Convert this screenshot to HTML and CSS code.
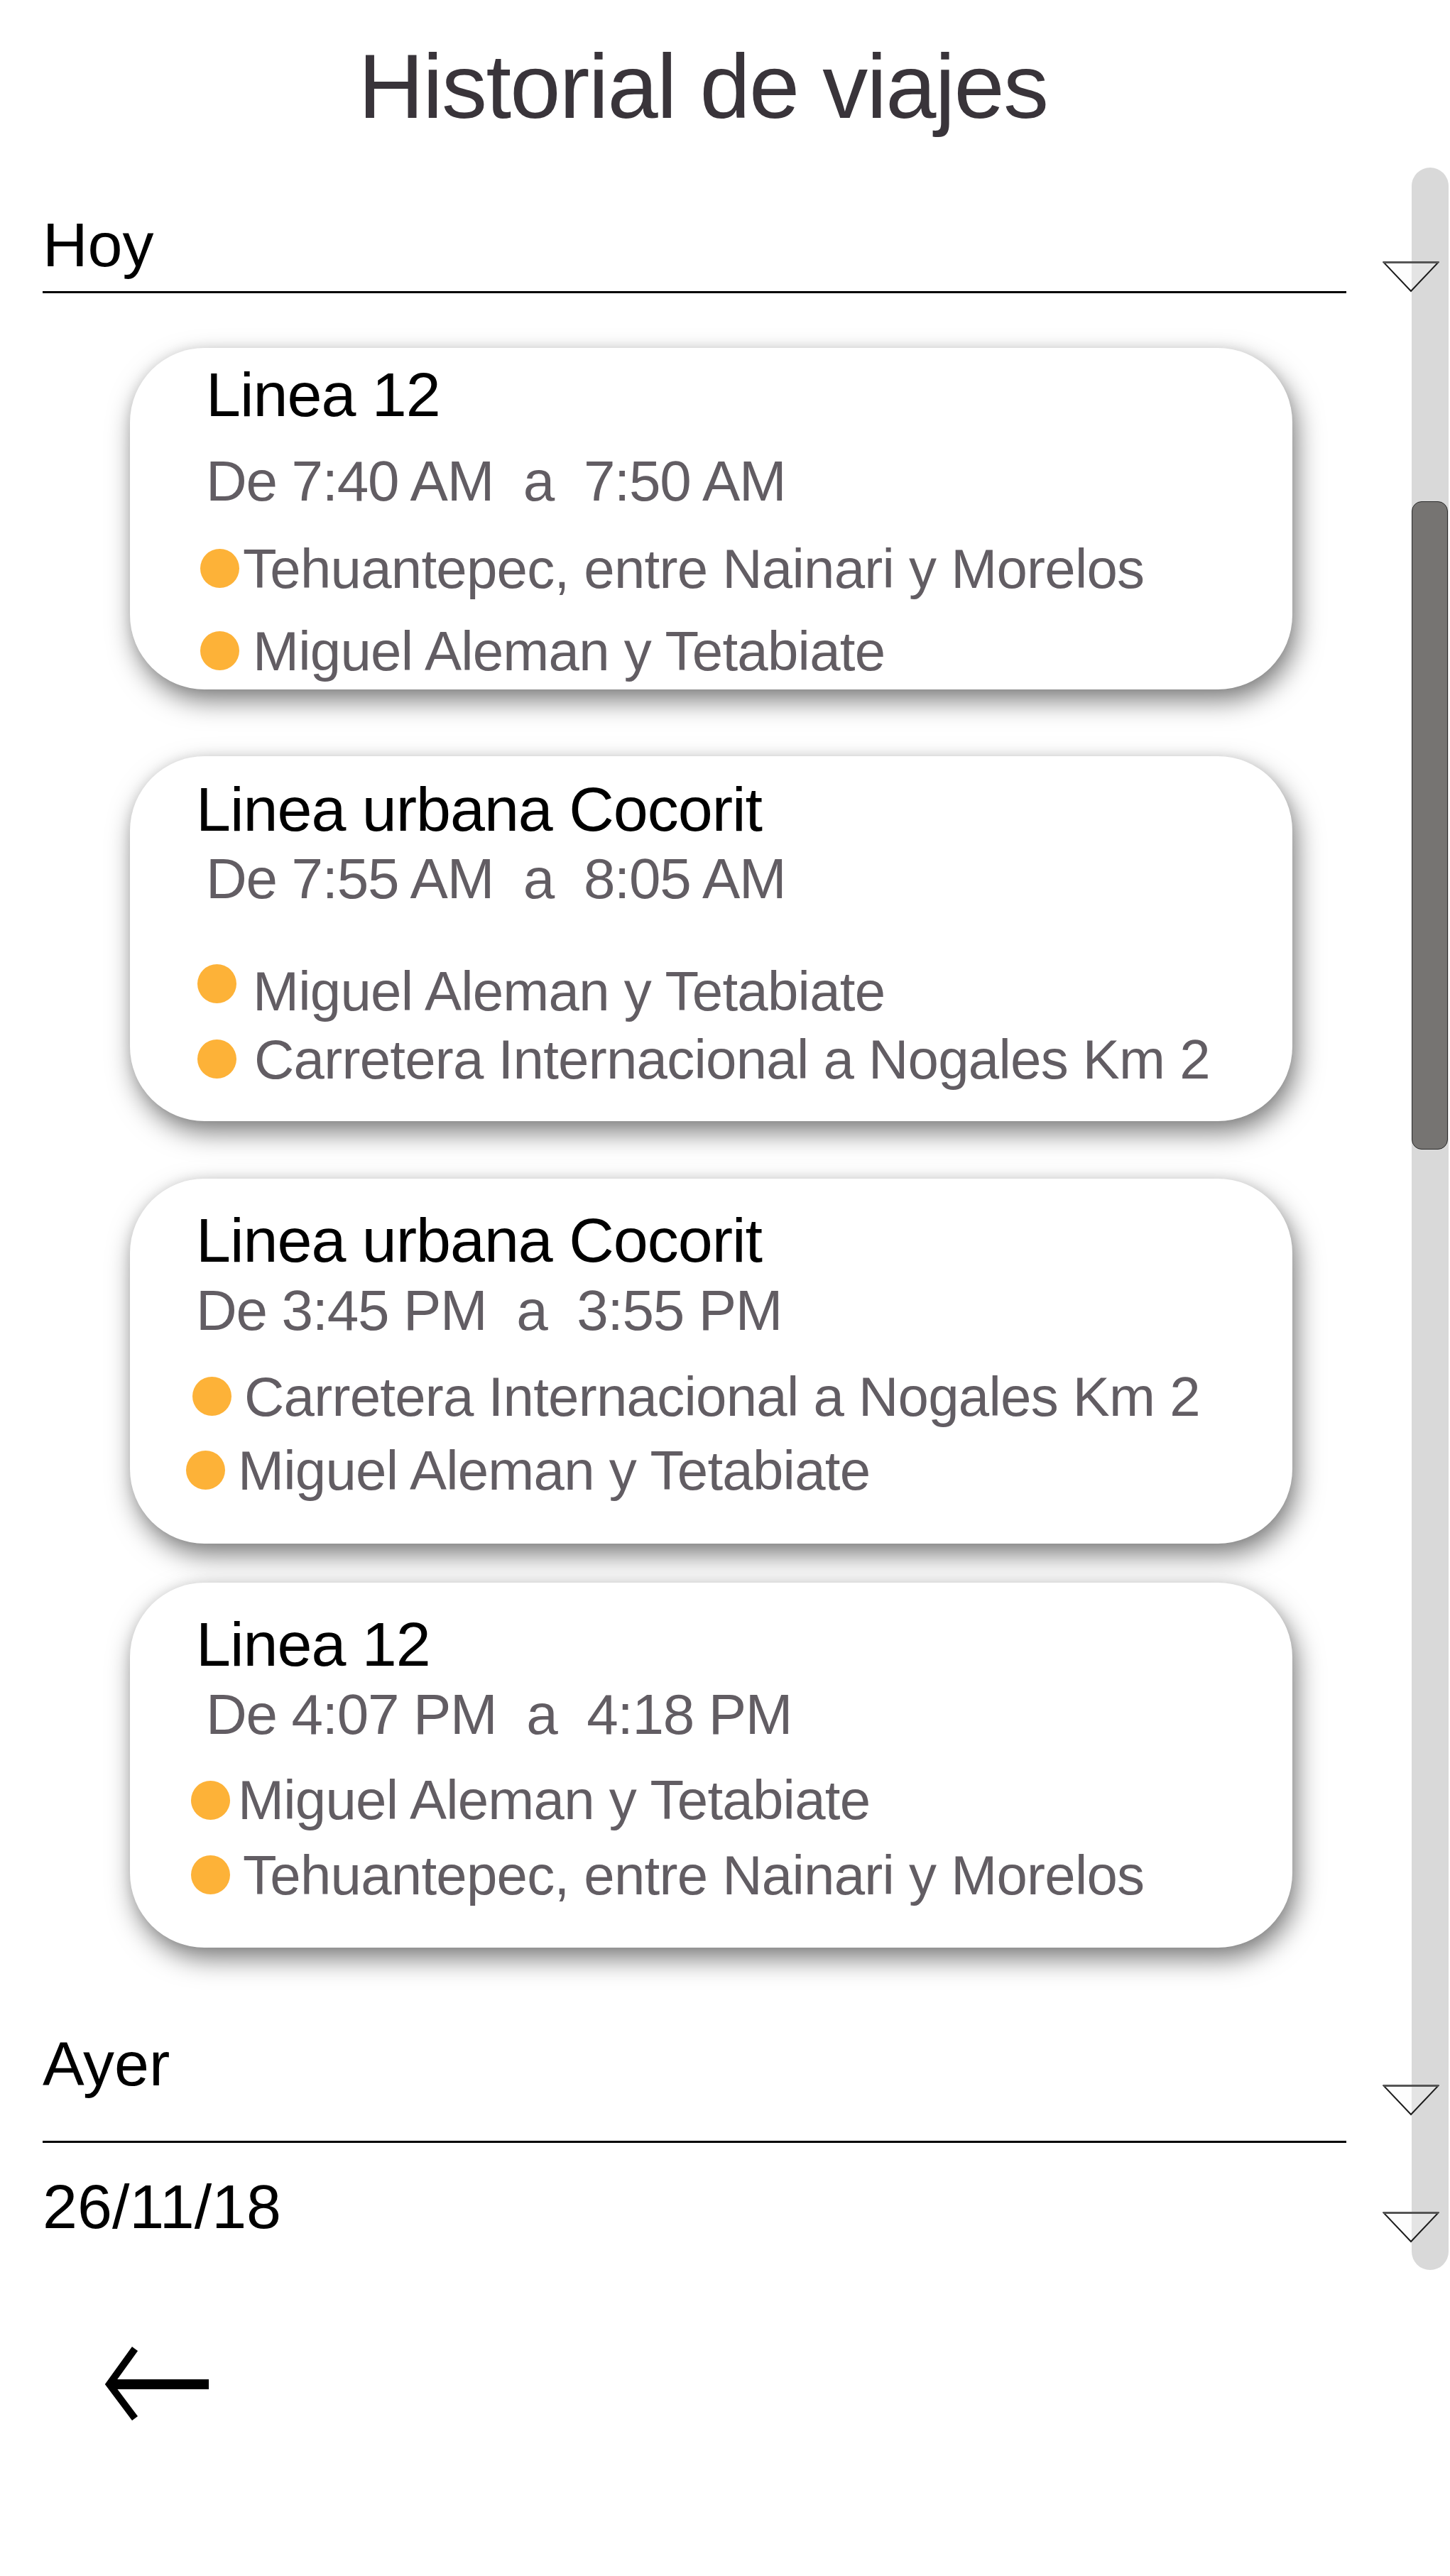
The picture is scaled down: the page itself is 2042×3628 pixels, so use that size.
FILE: index.html
```html
<!DOCTYPE html>
<html lang="es">
<head>
<meta charset="utf-8">
<title>Historial de viajes</title>
<link rel="stylesheet" href="styles.css">
</head>
<body>
<div class="page">
  <h1 class="page-title">Historial de viajes</h1>

  <section class="section section--today">
    <div class="section-head"><span class="section-label">Hoy</span></div>
    <svg class="section-caret" viewBox="0 0 80 44" width="80" height="44" aria-hidden="true">
      <polygon points="1.5,1.5 78.5,1.5 40,42" fill="rgba(250,250,250,0.35)" stroke="#1c1c1c" stroke-width="2" stroke-linejoin="miter"/>
      <line x1="1" y1="1.5" x2="79" y2="1.5" stroke="#555" stroke-width="3"/>
    </svg>
  </section>

  <div class="trips">
    <article class="trip trip--1">
      <h2 class="trip-line">Linea 12</h2>
      <p class="trip-time">De 7:40 AM&nbsp; a&nbsp; 7:50 AM</p>
      <ul class="trip-stops">
        <li class="trip-stop"><span class="trip-dot"></span><span class="trip-place">Tehuantepec, entre Nainari y Morelos</span></li>
        <li class="trip-stop"><span class="trip-dot"></span><span class="trip-place">Miguel Aleman y Tetabiate</span></li>
      </ul>
    </article>

    <article class="trip trip--2">
      <h2 class="trip-line">Linea urbana Cocorit</h2>
      <p class="trip-time">De 7:55 AM&nbsp; a&nbsp; 8:05 AM</p>
      <ul class="trip-stops">
        <li class="trip-stop"><span class="trip-dot"></span><span class="trip-place">Miguel Aleman y Tetabiate</span></li>
        <li class="trip-stop"><span class="trip-dot"></span><span class="trip-place">Carretera Internacional a Nogales Km 2</span></li>
      </ul>
    </article>

    <article class="trip trip--3">
      <h2 class="trip-line">Linea urbana Cocorit</h2>
      <p class="trip-time">De 3:45 PM&nbsp; a&nbsp; 3:55 PM</p>
      <ul class="trip-stops">
        <li class="trip-stop"><span class="trip-dot"></span><span class="trip-place">Carretera Internacional a Nogales Km 2</span></li>
        <li class="trip-stop"><span class="trip-dot"></span><span class="trip-place">Miguel Aleman y Tetabiate</span></li>
      </ul>
    </article>

    <article class="trip trip--4">
      <h2 class="trip-line">Linea 12</h2>
      <p class="trip-time">De 4:07 PM&nbsp; a&nbsp; 4:18 PM</p>
      <ul class="trip-stops">
        <li class="trip-stop"><span class="trip-dot"></span><span class="trip-place">Miguel Aleman y Tetabiate</span></li>
        <li class="trip-stop"><span class="trip-dot"></span><span class="trip-place">Tehuantepec, entre Nainari y Morelos</span></li>
      </ul>
    </article>
  </div>

  <section class="section section--yesterday">
    <div class="section-head"><span class="section-label">Ayer</span></div>
    <svg class="section-caret" viewBox="0 0 80 44" width="80" height="44" aria-hidden="true">
      <polygon points="1.5,1.5 78.5,1.5 40,42" fill="rgba(250,250,250,0.35)" stroke="#1c1c1c" stroke-width="2" stroke-linejoin="miter"/>
      <line x1="1" y1="1.5" x2="79" y2="1.5" stroke="#555" stroke-width="3"/>
    </svg>
  </section>

  <section class="section section--date">
    <div class="section-head"><span class="section-label">26/11/18</span></div>
    <svg class="section-caret" viewBox="0 0 80 44" width="80" height="44" aria-hidden="true">
      <polygon points="1.5,1.5 78.5,1.5 40,42" fill="rgba(250,250,250,0.35)" stroke="#1c1c1c" stroke-width="2" stroke-linejoin="miter"/>
      <line x1="1" y1="1.5" x2="79" y2="1.5" stroke="#555" stroke-width="3"/>
    </svg>
  </section>

  <button class="back" type="button" aria-label="Volver">
    <svg viewBox="0 0 170 120" width="170" height="120" aria-hidden="true">
      <line x1="22" y1="60" x2="159" y2="60" stroke="#000" stroke-width="14"/>
      <polyline points="55,10 19,60 55,108" fill="none" stroke="#000" stroke-width="10" stroke-linejoin="miter" stroke-miterlimit="10"/>
    </svg>
  </button>

  <div class="scrollbar" aria-hidden="true">
    <div class="scrollbar-thumb"></div>
  </div>
</div>
</body>
</html>
```
FILE: styles.css
```css
* {
  box-sizing: border-box;
}

html, body {
  margin: 0;
  padding: 0;
  background: #ffffff;
}

body {
  font-family: "Liberation Sans", Arial, Helvetica, sans-serif;
  color: #000;
}

.page {
  position: relative;
  width: 2042px;
  min-height: 3628px;
  overflow: hidden;
}

.page-title {
  margin: 0;
  padding: 47px 62px 0 0;
  font-size: 128px;
  line-height: 150px;
  font-weight: 400;
  letter-spacing: -1.7px;
  text-align: center;
  color: #39343a;
}

/* Section headers */
.section {
  display: flex;
  align-items: flex-start;
  margin-left: 60px;
}

.section-head {
  width: 1836px;
}

.section-label {
  display: block;
  font-size: 88px;
  line-height: 100px;
  color: #000;
}

.section-caret {
  display: block;
  position: relative;
  z-index: 2;
  flex: none;
  margin-left: 51px;
}

.section--today {
  margin-top: 97.5px;
}
.section--today .section-head {
  padding-bottom: 15.5px;
  border-bottom: 3px solid #000;
}
.section--today .section-caret {
  margin-top: 73.5px;
}

.section--yesterday {
  margin-top: 113.5px;
}
.section--yesterday .section-head {
  padding-bottom: 58.5px;
  border-bottom: 3px solid #000;
}
.section--yesterday .section-caret {
  margin-top: 79.5px;
}

.section--date {
  margin-top: 39.5px;
}
.section--date .section-caret {
  margin-top: 57.5px;
}

/* Trip cards */
.trips {
  margin-left: 183px;
  width: 1637px;
}

.trip {
  height: 514px;
  margin-top: var(--mt);
  padding: var(--pt) 40px 0 93px;
  background: #ffffff;
  border-radius: 105px;
  box-shadow: 6px 16px 36px rgba(0, 0, 0, 0.5), 0 0 16px rgba(0, 0, 0, 0.08);
}

.trip-line {
  margin: 0 0 0 var(--title-x);
  font-size: 88px;
  line-height: 90px;
  font-weight: 400;
  letter-spacing: -1px;
  color: #000;
}

.trip-time {
  margin: var(--time-gap) 0 0 var(--time-x);
  font-size: 80px;
  line-height: 90px;
  letter-spacing: -1.3px;
  color: #625d63;
  white-space: nowrap;
}

.trip-stops {
  list-style: none;
  margin: var(--stops-gap) 0 0;
  padding: 0;
}

.trip-stop {
  display: flex;
  align-items: flex-start;
  height: 90px;
}

.trip-stop + .trip-stop {
  margin-top: var(--stop-gap);
}

.trip-dot {
  flex: none;
  width: 55px;
  height: 55px;
  border-radius: 50%;
  background: #fdb238;
  margin-top: 17px;
}

.trip-place {
  font-size: 78px;
  line-height: 90px;
  letter-spacing: -0.75px;
  color: #625d63;
  white-space: nowrap;
}

.trip-stop:first-child .trip-dot {
  margin-left: var(--dot1-x);
  margin-top: var(--dot1-y);
}
.trip-stop:first-child .trip-place {
  margin-left: var(--gap1);
}
.trip-stop:last-child .trip-dot {
  margin-left: var(--dot2-x);
}
.trip-stop:last-child .trip-place {
  margin-left: var(--gap2);
}

.trip--1 {
  height: 481px;
  --mt: 77px;
  --pt: 20.5px;
  --title-x: 14px;
  --time-x: 14px;
  --time-gap: 32.8px;
  --stops-gap: 32.6px;
  --stop-gap: 26px;
  --dot1-x: 6px;
  --dot1-y: 17px;
  --gap1: 5px;
  --dot2-x: 6px;
  --gap2: 19px;
}

.trip--2 {
  --mt: 94px;
  --pt: 29.5px;
  --title-x: 0px;
  --time-x: 14px;
  --time-gap: 8.8px;
  --stops-gap: 67.7px;
  --stop-gap: 6px;
  --dot1-x: 2px;
  --dot1-y: 7px;
  --gap1: 23px;
  --dot2-x: 2px;
  --gap2: 25px;
}

.trip--3 {
  --mt: 81px;
  --pt: 41.5px;
  --title-x: 0px;
  --time-x: 0px;
  --time-gap: 9.8px;
  --stops-gap: 30.7px;
  --stop-gap: 14px;
  --dot1-x: -5px;
  --dot1-y: 17px;
  --gap1: 18px;
  --dot2-x: -14px;
  --gap2: 18px;
}

.trip--4 {
  --mt: 55px;
  --pt: 41.5px;
  --title-x: 0px;
  --time-x: 14px;
  --time-gap: 9.8px;
  --stops-gap: 29.7px;
  --stop-gap: 16px;
  --dot1-x: -7px;
  --dot1-y: 18px;
  --gap1: 11px;
  --dot2-x: -7px;
  --gap2: 18px;
}

/* Back button */
.back {
  display: block;
  margin: 139px 0 0 135px;
  padding: 0;
  border: 0;
  background: none;
  cursor: pointer;
}

.back svg {
  display: block;
}

/* Scrollbar overlay */
.scrollbar {
  position: absolute;
  z-index: 1;
  top: 236px;
  right: 2px;
  width: 52px;
  height: 2961px;
  border-radius: 26px;
  background: #d9d9d9;
}

.scrollbar-thumb {
  margin-top: 470px;
  width: 51px;
  height: 913px;
  border-radius: 14px;
  background: #767472;
  border: 1.5px solid #2a2a2a;
}
```
